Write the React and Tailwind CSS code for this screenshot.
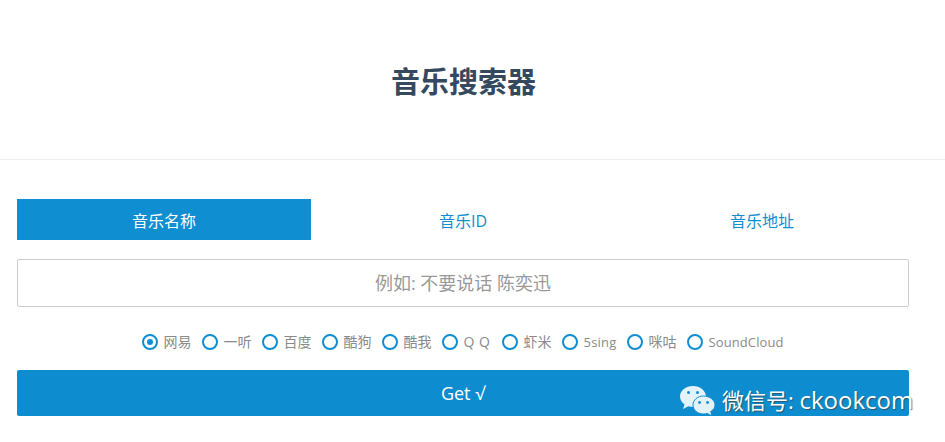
const font = { fontFamily: '"Open Sans", "Noto Sans CJK SC", sans-serif' };
const sources = [
  { label: "网易", cls: "text-[14px]" },
  { label: "一听", cls: "text-[14px]" },
  { label: "百度", cls: "text-[14px]" },
  { label: "酷狗", cls: "text-[14px]" },
  { label: "酷我", cls: "text-[14px]" },
  { label: "Q Q", cls: "w-[28px] text-[14px] tracking-[0.5px]" },
  { label: "虾米", cls: "text-[14px]" },
  { label: "5sing", cls: "w-[33px] text-[13px] tracking-[0.2px]" },
  { label: "咪咕", cls: "text-[14px]" },
  { label: "SoundCloud", cls: "w-[75px] text-[13px] tracking-[0.1px]" },
];

function Radio({ label, cls, checked }) {
  return (
    <label className="flex items-center gap-[6px] mr-[10px] last:mr-0">
      <span className="flex h-[16px] w-[16px] items-center justify-center rounded-full border-2 border-[#0f8fd2] bg-white">
        {checked && <span className="h-[6px] w-[6px] rounded-full bg-[#0f8fd2]" />}
      </span>
      <span className={"whitespace-nowrap leading-[20px] text-[#8a8a8a] " + cls}>{label}</span>
    </label>
  );
}

export default function App() {
  return (
    <div className="relative h-[442px] w-[945px] overflow-hidden bg-white" style={font}>
      <header className="flex h-[160px] justify-center border-b border-[#eeeeee] pr-[18px] pt-[61px]">
        <h1 className="text-[29px] font-bold leading-[42px] text-[#34495e]">音乐搜索器</h1>
      </header>
      <main className="w-[892px] ml-[17px] pt-[39px]">
        <div className="grid grid-cols-3 gap-[5px] text-[16px]">
          <div className="flex h-[41px] items-center justify-center bg-[#0f8fd2] pt-[2px] text-white">音乐名称</div>
          <div className="flex h-[41px] items-center justify-center pt-[2px] text-[#0f8fd2]">音乐ID</div>
          <div className="flex h-[41px] items-center justify-center pt-[2px] text-[#0f8fd2]">音乐地址</div>
        </div>
        <input
          readOnly
          placeholder="例如: 不要说话 陈奕迅"
          className="mt-[19px] block h-[48px] w-full rounded-[2px] border border-[#cccccc] bg-white text-center text-[18px] outline-none placeholder:text-[#999999]"
        />
        <div className="mt-[25px] flex h-[20px] items-center justify-center pr-[1px]">
          {sources.map((s, i) => (
            <Radio key={s.label} label={s.label} cls={s.cls} checked={i === 0} />
          ))}
        </div>
        <button className="mt-[18px] block h-[46px] w-full rounded-[2px] bg-[#0d8dcf] text-[18px] text-white">Get √</button>
      </main>
      <div className="absolute left-[680px] top-[384px] flex items-center gap-[7px] text-[22px] leading-[32px] text-white [text-shadow:1px_1px_1px_rgba(60,60,60,0.7)]">
        <svg width="35" height="31" viewBox="0 0 35 31">
          <path d="M13 1C6 1 0 5.500 0 11.500c0 3.300 1.800 6 4.500 8l-1.500 4.500 5.300-2.700c1.500.4 3 .7 4.700.7 7 0 13-4.800 13-10.500S20 1 13 1z" fill="#e4f2fa" />
          <path d="M23.500 11C17.500 11 13 15 13 20s4.500 9 10.500 9c1.300 0 2.600-.2 3.700-.6L32 31l-1.300-4.400c2.600-1.700 4.300-3.900 4.300-6.600 0-5-5.500-9-11.500-9z" fill="#e4f2fa" stroke="#0f8fd2" strokeWidth="1" />
          <circle cx="8.500" cy="7.500" r="1.500" fill="#0f8fd2" />
          <circle cx="17.500" cy="7.500" r="1.500" fill="#0f8fd2" />
          <circle cx="19.500" cy="17.500" r="1.400" fill="#0f8fd2" />
          <circle cx="27.500" cy="17.500" r="1.400" fill="#0f8fd2" />
        </svg>
        <span>微信号: <span className="text-[24px]">ckookcom</span></span>
      </div>
    </div>
  );
}
